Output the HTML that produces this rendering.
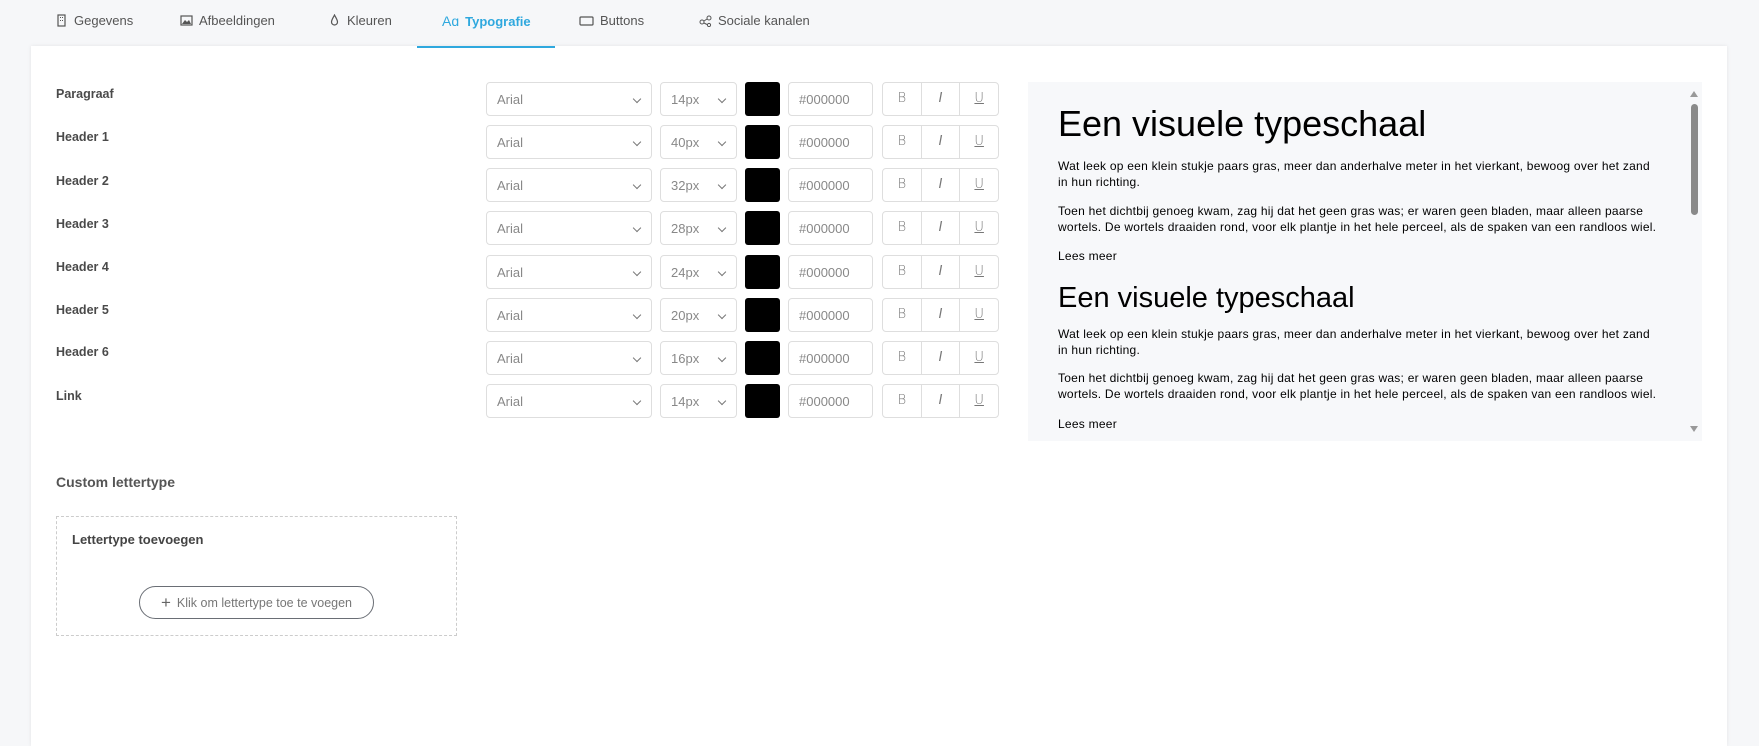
<!DOCTYPE html>
<html><head><meta charset="utf-8"><style>
*{box-sizing:border-box;margin:0;padding:0}
body{width:1759px;height:715px;background:#f6f7f9;font-family:"Liberation Sans",sans-serif;position:relative;overflow:hidden;color:#444}
.tab{position:absolute;top:13px;font-size:13px;color:#555;display:flex;align-items:center;gap:6px}
.tab svg{width:13px;height:13px}
.card{position:absolute;left:31px;top:46px;width:1696px;height:700px;background:#fff;box-shadow:0 0 4px rgba(0,0,0,.08)}
.ul{position:absolute;left:417px;top:46px;width:138px;height:2px;background:#2fa8de}
.lbl{position:absolute;left:56px;font-size:12.5px;font-weight:bold;color:#4a4a4a}
.box{position:absolute;height:34px;border:1px solid #dedede;border-radius:4px;background:#fff;font-size:13px;color:#888;display:flex;align-items:center;padding-left:10px}
.chev{position:absolute;right:11px;top:13px;width:6px;height:6px;border-right:1px solid #777;border-bottom:1px solid #777;transform:rotate(45deg)}
.sw{position:absolute;width:35px;height:34px;background:#000;border-radius:3px}
.biu{position:absolute;width:117px;height:34px;border:1px solid #dedede;border-radius:4px;display:flex}
.biu span{flex:1;text-align:center;line-height:32px;font-size:13px;color:#777;border-left:1px solid #dedede;font-family:"DejaVu Sans",sans-serif;font-weight:200}
.biu span:first-child{border-left:none}
.prev{position:absolute;left:1028px;top:82px;width:674px;height:359px;background:#f7f8fa;overflow:hidden}
.prev .t{position:absolute;left:30px;color:#000;font-family:"Liberation Sans",Arial,sans-serif;white-space:nowrap}
.p{font-size:12px;line-height:16px;letter-spacing:0.25px}
</style></head><body>
<div class="tab" style="left:55px"><svg viewBox="0 0 13 13"><rect x="3" y="1" width="7" height="11" fill="none" stroke="#555" stroke-width="1.2"/><rect x="5" y="3" width="1" height="1" fill="#555"/><rect x="7" y="3" width="1" height="1" fill="#555"/><rect x="5" y="6" width="1" height="1" fill="#555"/><rect x="7" y="6" width="1" height="1" fill="#555"/></svg>Gegevens</div>
<div class="tab" style="left:180px"><svg viewBox="0 0 13 13"><rect x="1" y="2" width="11" height="9" fill="none" stroke="#555" stroke-width="1.2"/><path d="M2 10l3-4 2 2 2-2 2 4z" fill="#555"/></svg>Afbeeldingen</div>
<div class="tab" style="left:328px"><svg viewBox="0 0 13 13"><path d="M6.5 1C5 4 3.5 6 3.5 8a3 3 0 006 0c0-2-1.5-4-3-7z" fill="none" stroke="#555" stroke-width="1.2"/></svg>Kleuren</div>
<div class="tab" style="left:442px;color:#2fa8de;font-weight:bold"><span style="font-weight:normal;font-size:14px">Aɑ</span>Typografie</div>
<div class="tab" style="left:579px"><svg viewBox="0 0 15 13" style="width:15px"><rect x="1" y="3" width="13" height="8" rx="1" fill="none" stroke="#555" stroke-width="1.2"/></svg>Buttons</div>
<div class="tab" style="left:699px"><svg viewBox="0 0 13 13"><circle cx="3" cy="8" r="2" fill="none" stroke="#555"/><circle cx="10" cy="4" r="2" fill="none" stroke="#555"/><circle cx="10" cy="11" r="1.6" fill="none" stroke="#555"/><path d="M5 7l3-2M5 9l3 1.5" stroke="#555"/></svg>Sociale kanalen</div>
<div class="card"></div>
<div class="ul"></div>

<div class="lbl" style="top:87px">Paragraaf</div>
<div class="lbl" style="top:130px">Header 1</div>
<div class="lbl" style="top:174px">Header 2</div>
<div class="lbl" style="top:217px">Header 3</div>
<div class="lbl" style="top:260px">Header 4</div>
<div class="lbl" style="top:303px">Header 5</div>
<div class="lbl" style="top:345px">Header 6</div>
<div class="lbl" style="top:389px">Link</div>

<div class="box" style="left:486px;top:82px;width:166px">Arial<i class="chev"></i></div><div class="box" style="left:660px;top:82px;width:77px">14px<i class="chev"></i></div><div class="sw" style="left:745px;top:82px"></div><div class="box" style="left:788px;top:82px;width:85px">#000000</div><div class="biu" style="left:882px;top:82px"><span>B</span><span><i>I</i></span><span><u>U</u></span></div>
<div class="box" style="left:486px;top:125px;width:166px">Arial<i class="chev"></i></div><div class="box" style="left:660px;top:125px;width:77px">40px<i class="chev"></i></div><div class="sw" style="left:745px;top:125px"></div><div class="box" style="left:788px;top:125px;width:85px">#000000</div><div class="biu" style="left:882px;top:125px"><span>B</span><span><i>I</i></span><span><u>U</u></span></div>
<div class="box" style="left:486px;top:168px;width:166px">Arial<i class="chev"></i></div><div class="box" style="left:660px;top:168px;width:77px">32px<i class="chev"></i></div><div class="sw" style="left:745px;top:168px"></div><div class="box" style="left:788px;top:168px;width:85px">#000000</div><div class="biu" style="left:882px;top:168px"><span>B</span><span><i>I</i></span><span><u>U</u></span></div>
<div class="box" style="left:486px;top:211px;width:166px">Arial<i class="chev"></i></div><div class="box" style="left:660px;top:211px;width:77px">28px<i class="chev"></i></div><div class="sw" style="left:745px;top:211px"></div><div class="box" style="left:788px;top:211px;width:85px">#000000</div><div class="biu" style="left:882px;top:211px"><span>B</span><span><i>I</i></span><span><u>U</u></span></div>
<div class="box" style="left:486px;top:255px;width:166px">Arial<i class="chev"></i></div><div class="box" style="left:660px;top:255px;width:77px">24px<i class="chev"></i></div><div class="sw" style="left:745px;top:255px"></div><div class="box" style="left:788px;top:255px;width:85px">#000000</div><div class="biu" style="left:882px;top:255px"><span>B</span><span><i>I</i></span><span><u>U</u></span></div>
<div class="box" style="left:486px;top:298px;width:166px">Arial<i class="chev"></i></div><div class="box" style="left:660px;top:298px;width:77px">20px<i class="chev"></i></div><div class="sw" style="left:745px;top:298px"></div><div class="box" style="left:788px;top:298px;width:85px">#000000</div><div class="biu" style="left:882px;top:298px"><span>B</span><span><i>I</i></span><span><u>U</u></span></div>
<div class="box" style="left:486px;top:341px;width:166px">Arial<i class="chev"></i></div><div class="box" style="left:660px;top:341px;width:77px">16px<i class="chev"></i></div><div class="sw" style="left:745px;top:341px"></div><div class="box" style="left:788px;top:341px;width:85px">#000000</div><div class="biu" style="left:882px;top:341px"><span>B</span><span><i>I</i></span><span><u>U</u></span></div>
<div class="box" style="left:486px;top:384px;width:166px">Arial<i class="chev"></i></div><div class="box" style="left:660px;top:384px;width:77px">14px<i class="chev"></i></div><div class="sw" style="left:745px;top:384px"></div><div class="box" style="left:788px;top:384px;width:85px">#000000</div><div class="biu" style="left:882px;top:384px"><span>B</span><span><i>I</i></span><span><u>U</u></span></div>

<div class="prev">
<div class="t" style="top:21px;font-size:36px;line-height:42px">Een visuele typeschaal</div>
<div class="t p" style="top:76px">Wat leek op een klein stukje paars gras, meer dan anderhalve meter in het vierkant, bewoog over het zand<br>in hun richting.</div>
<div class="t p" style="top:121px">Toen het dichtbij genoeg kwam, zag hij dat het geen gras was; er waren geen bladen, maar alleen paarse<br>wortels. De wortels draaiden rond, voor elk plantje in het hele perceel, als de spaken van een randloos wiel.</div>
<div class="t p" style="top:166px">Lees meer</div>
<div class="t" style="top:199px;font-size:29px;line-height:34px">Een visuele typeschaal</div>
<div class="t p" style="top:244px">Wat leek op een klein stukje paars gras, meer dan anderhalve meter in het vierkant, bewoog over het zand<br>in hun richting.</div>
<div class="t p" style="top:288px">Toen het dichtbij genoeg kwam, zag hij dat het geen gras was; er waren geen bladen, maar alleen paarse<br>wortels. De wortels draaiden rond, voor elk plantje in het hele perceel, als de spaken van een randloos wiel.</div>
<div class="t p" style="top:334px">Lees meer</div>
<div style="position:absolute;left:663px;top:22px;width:7px;height:111px;border-radius:4px;background:#8a8a8a"></div>
<div style="position:absolute;left:662px;top:9px;width:0;height:0;border-left:4.5px solid transparent;border-right:4.5px solid transparent;border-bottom:6px solid #999"></div>
<div style="position:absolute;left:662px;top:344px;width:0;height:0;border-left:4.5px solid transparent;border-right:4.5px solid transparent;border-top:6px solid #999"></div>
</div>

<div style="position:absolute;left:56px;top:474px;font-size:14px;font-weight:bold;color:#555">Custom lettertype</div>
<div style="position:absolute;left:56px;top:516px;width:401px;height:120px;border:1px dashed #ccc"></div>
<div style="position:absolute;left:72px;top:532px;font-size:13px;font-weight:bold;color:#444">Lettertype toevoegen</div>
<div style="position:absolute;left:139px;top:586px;width:235px;height:33px;border:1px solid #6a6e75;border-radius:17px;font-size:12.5px;color:#777;display:flex;align-items:center;justify-content:center;gap:6px"><span style="font-size:17px;color:#666">+</span>Klik om lettertype toe te voegen</div>
</body></html>
